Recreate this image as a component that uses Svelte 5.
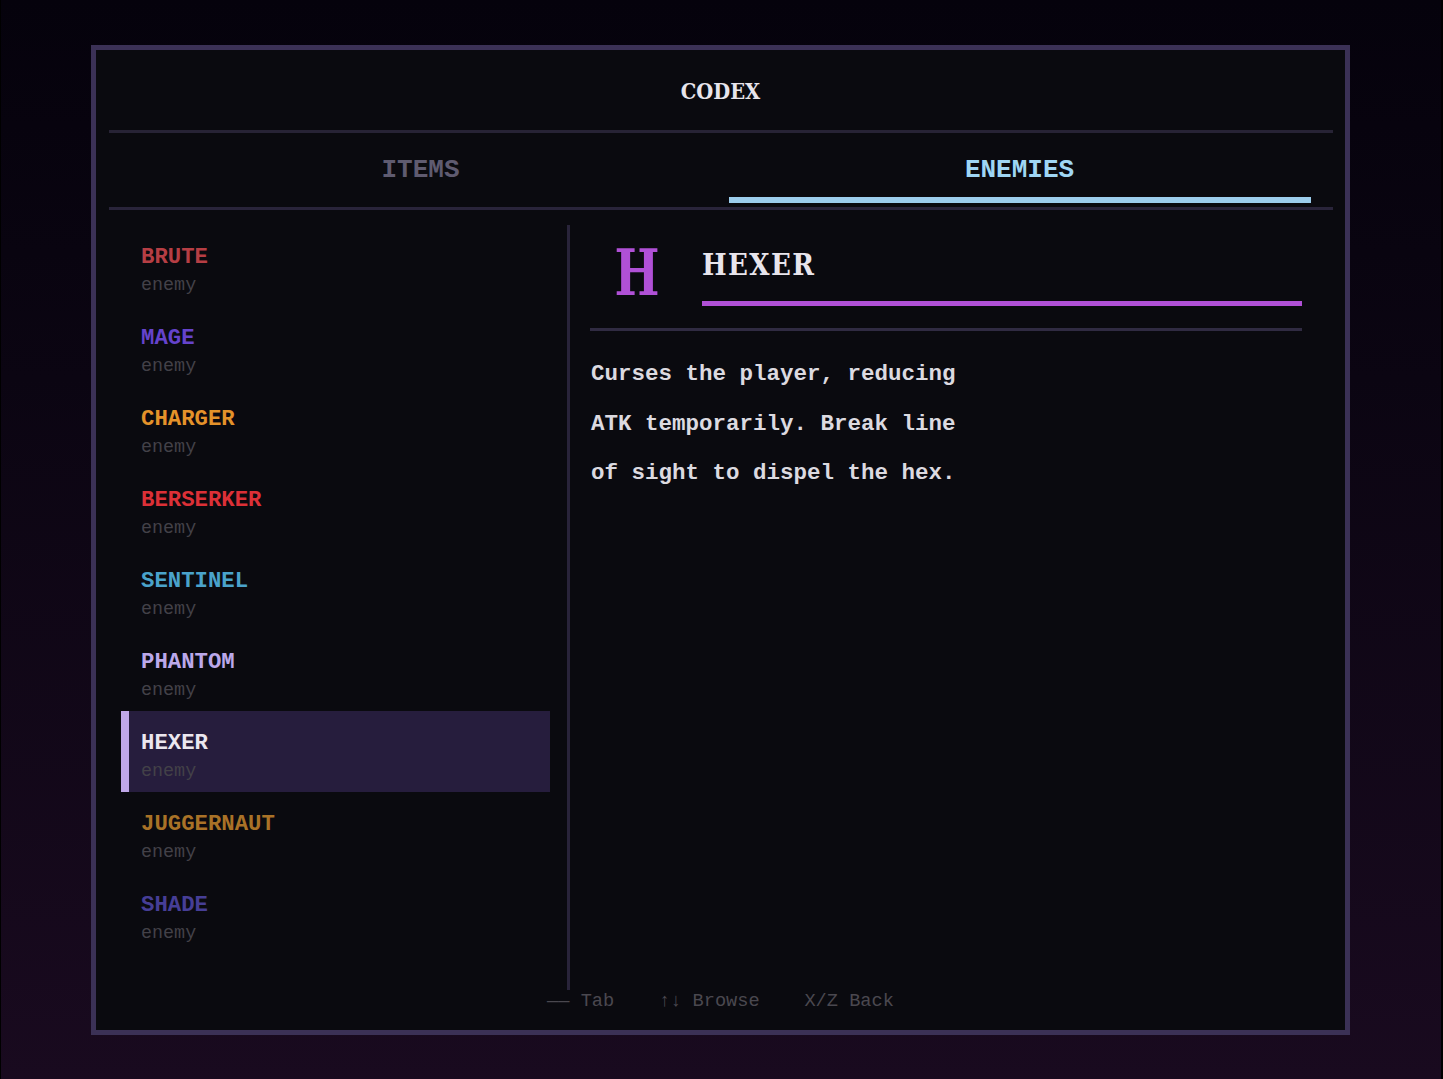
<script>
  const tabs = ['ITEMS', 'ENEMIES'];

  const enemies = [
    { name: 'BRUTE', color: '#b63e44' },
    { name: 'MAGE', color: '#6543cc' },
    { name: 'CHARGER', color: '#e4922a' },
    { name: 'BERSERKER', color: '#dc3037' },
    { name: 'SENTINEL', color: '#4aa3cb' },
    { name: 'PHANTOM', color: '#bba8ea' },
    {
      name: 'HEXER',
      color: '#b050d6',
      lines: [
        'Curses the player, reducing',
        'ATK temporarily. Break line',
        'of sight to dispel the hex.'
      ]
    },
    { name: 'JUGGERNAUT', color: '#a97227' },
    { name: 'SHADE', color: '#463e96' }
  ];

  let activeTab = $state('ENEMIES');
  let selectedIndex = $state(6);
  let selected = $derived(enemies[selectedIndex]);

  function onKeydown(e) {
    if (e.key === 'ArrowDown') {
      selectedIndex = Math.min(selectedIndex + 1, enemies.length - 1);
    } else if (e.key === 'ArrowUp') {
      selectedIndex = Math.max(selectedIndex - 1, 0);
    }
  }
</script>

<svelte:window onkeydown={onKeydown} />

<div class="screen">
  <div class="panel">
    <header class="title">CODEX</header>

    <nav class="tabs">
      {#each tabs as tab}
        <button class="tab" class:active={tab === activeTab} onclick={() => (activeTab = tab)}>
          {tab}
        </button>
      {/each}
    </nav>

    <div class="body">
      <div class="list">
        {#each enemies as enemy, i}
          <button class="row" class:selected={i === selectedIndex} onclick={() => (selectedIndex = i)}>
            <span class="name" style="color: {i === selectedIndex ? '#ebe7ef' : enemy.color}">{enemy.name}</span>
            <span class="kind">enemy</span>
          </button>
        {/each}
      </div>

      <div class="detail">
        <div class="detail-head">
          <div class="glyph" style="color: {selected.color}">{selected.name[0]}</div>
          <div class="detail-name" style="border-color: {selected.color}">{selected.name}</div>
        </div>
        <div class="description">
          {#each selected.lines ?? [] as line}
            <div>{line}</div>
          {/each}
        </div>
      </div>
    </div>

    <footer class="hints">—— Tab    ↑↓ Browse    X/Z Back</footer>
  </div>
</div>

<style>
  :global(body) {
    margin: 0;
    background: #000;
  }

  .screen {
    box-sizing: border-box;
    width: 1440px;
    height: 1079px;
    margin-left: 1px;
    padding: 45px 91px 45px 90px;
    background: linear-gradient(#05020c, #0b0512 35%, #190a1f);
    font-family: 'Liberation Mono', 'Courier New', monospace;
    overflow: hidden;
  }

  .panel {
    box-sizing: border-box;
    height: 990px;
    padding: 0 12.5px;
    border: 5px solid #3b3156;
    background: #0a0a0f;
    display: flex;
    flex-direction: column;
  }

  button {
    margin: 0;
    padding: 0;
    border: 0;
    background: none;
    font-family: inherit;
    text-align: left;
  }

  .title,
  .glyph,
  .detail-name {
    font-family: 'DejaVu Serif Condensed', 'DejaVu Serif', serif;
    font-stretch: condensed;
    font-weight: bold;
  }

  .title {
    box-sizing: border-box;
    height: 83px;
    border-bottom: 3px solid #272335;
    color: #e8e5ec;
    font-size: 21.7px;
    line-height: 83px;
    text-align: center;
  }

  .tabs {
    box-sizing: border-box;
    height: 77px;
    padding: 0 22px 4px 21px;
    border-bottom: 3px solid #29243a;
    display: grid;
    grid-template-columns: 1fr 1fr;
    column-gap: 17px;
  }

  .tab {
    border-bottom: 6px solid transparent;
    padding-top: 10px;
    color: #5f5b70;
    font-size: 26px;
    font-weight: bold;
    text-align: center;
  }

  .tab.active {
    color: #9fd6f4;
    border-color: #9ccdec;
  }

  .body {
    height: 765px;
    margin-top: 15px;
    padding: 0 31px 0 12.5px;
    display: flex;
  }

  .list {
    width: 429px;
    margin-right: 17px;
  }

  .row {
    box-sizing: border-box;
    width: 429px;
    height: 81px;
    padding: 18px 0 0 12px;
    border-left: 8px solid transparent;
    display: flex;
    flex-direction: column;
  }

  .row.selected {
    background: #261d3d;
    border-color: #bfa7e8;
    background-clip: padding-box;
  }

  .name {
    height: 29px;
    font-size: 22.3px;
    font-weight: bold;
    line-height: 28px;
  }

  .kind {
    height: 28px;
    color: #434148;
    font-size: 18.4px;
    line-height: 28px;
  }

  .detail {
    flex: 1;
    padding-left: 20px;
    border-left: 3px solid #29243a;
  }

  .detail-head {
    box-sizing: border-box;
    height: 106px;
    padding-top: 12px;
    border-bottom: 3px solid #302b42;
    display: flex;
  }

  .glyph {
    width: 94px;
    height: 70px;
    margin-right: 18px;
    font-size: 63px;
    line-height: 72px;
    text-align: center;
    transform: scaleX(0.84);
  }

  .detail-name {
    box-sizing: border-box;
    flex: 1;
    height: 69px;
    border-bottom: 5px solid;
    color: #e8e5ec;
    font-size: 29px;
    letter-spacing: 1.4px;
    line-height: 56px;
  }

  .description {
    padding: 19px 0 0 1px;
    color: #dcdae0;
    font-size: 22.5px;
    font-weight: bold;
    line-height: 49.5px;
  }

  .hints {
    color: #4a484f;
    font-size: 18.65px;
    line-height: 22px;
    text-align: center;
    white-space: pre;
  }
</style>
